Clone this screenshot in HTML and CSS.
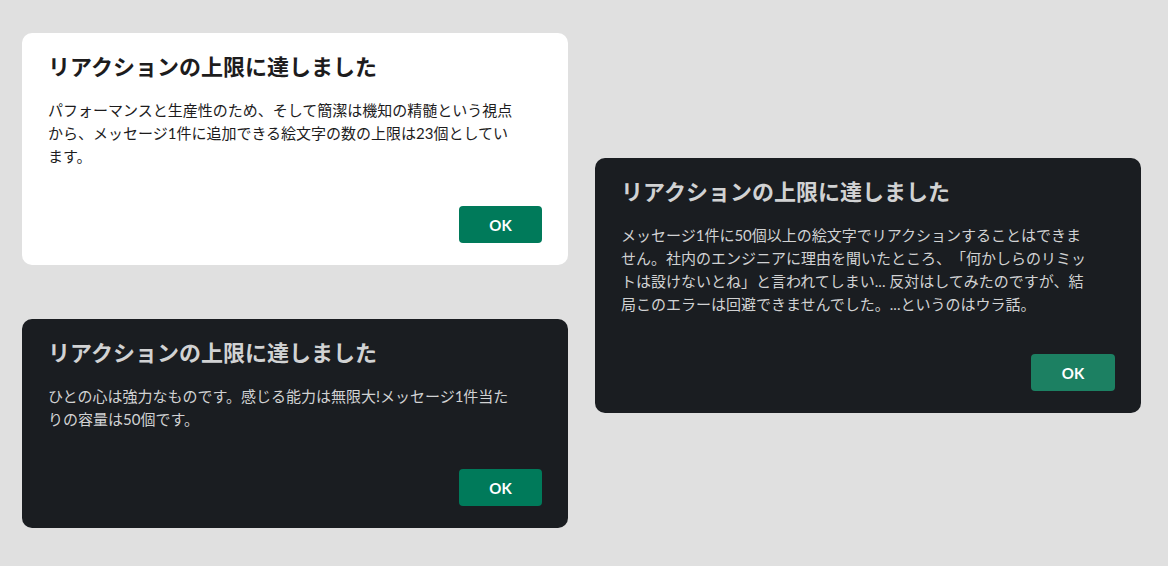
FILE: index.html
```html
<html>

<head>
    <title>リアクションの上限</title>
    <meta charset="utf-8">
    <link rel="stylesheet" href="styles.css">
</head>

<body>
    <div class="board">
        <div class="column">
            <!-- ライト -->
            <div class="dialog light">
                <h2 class="dialog-title">リアクションの上限に達しました</h2>
                <p class="dialog-text">パフォーマンスと生産性のため、そして簡潔は機知の精髄という視点から、メッセージ1件に追加できる絵文字の数の上限は23個としています。</p>
                <div class="dialog-footer">
                    <button class="ok-btn">OK</button>
                </div>
            </div>

            <!-- ダーク -->
            <div class="dialog dark">
                <h2 class="dialog-title">リアクションの上限に達しました</h2>
                <p class="dialog-text">ひとの心は強力なものです。感じる能力は無限大!メッセージ1件当たりの容量は50個です。</p>
                <div class="dialog-footer">
                    <button class="ok-btn">OK</button>
                </div>
            </div>
        </div>

        <div class="column side">
            <div class="dialog dark">
                <h2 class="dialog-title">リアクションの上限に達しました</h2>
                <p class="dialog-text">メッセージ1件に50個以上の絵文字でリアクションすることはできません。社内のエンジニアに理由を聞いたところ、「何かしらのリミットは設けないとね」と言われてしまい... 反対はしてみたのですが、結局このエラーは回避できませんでした。...というのはウラ話。</p>
                <div class="dialog-footer">
                    <button class="ok-btn hover">OK</button>
                </div>
            </div>
        </div>
    </div>
</body>

</html>
```

FILE: styles.css
```css
* {
    box-sizing: border-box;
    margin: 0;
    padding: 0;
}

body {
    background-color: #e0e0e0;
    font-family: Lato, "Noto Sans CJK JP", sans-serif;
    padding: 33px 22px;
}

.board {
    display: flex;
    gap: 27px;
    align-items: flex-start;
}

.column {
    display: flex;
    flex-direction: column;
    gap: 54px;
    width: 546px;
}

/* 右側のダイアログは少し下 */
.side {
    margin-top: 125px;
}

.dialog {
    border-radius: 10px;
    padding: 19px 26px 22px 26px;
}

.light {
    background: #ffffff;
    color: #1d1c1d;
}

.dark {
    background: #1a1d21;
    color: #d1d2d3;
}

.dialog-title {
    font-size: 22px;
    font-weight: 700;
    line-height: 30px;
    margin-bottom: 17px;
    text-spacing-trim: space-all;
}

.dialog-text {
    font-size: 15px;
    line-height: 23px;
    max-width: 468px;
    margin-bottom: 38px;
    text-spacing-trim: space-all;
}

.dialog-footer {
    display: flex;
    justify-content: flex-end;
}

.ok-btn {
    width: 83px;
    height: 37px;
    border: none;
    border-radius: 4px;
    background-color: #007a5a;
    color: #ffffff;
    font-family: Lato, sans-serif;
    font-size: 15px;
    font-weight: 700;
    cursor: pointer;
}

.ok-btn.hover {
    background-color: #1c8062;
    width: 84px;
}
```
